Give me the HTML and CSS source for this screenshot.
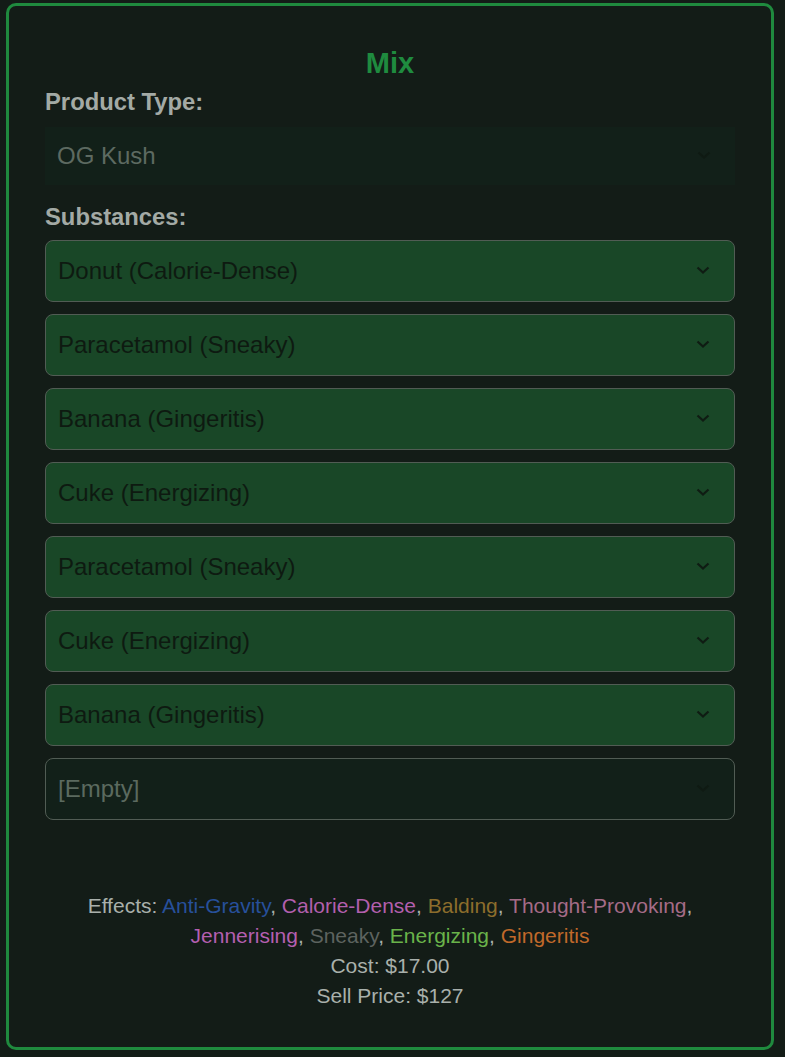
FILE: index.html
```html
<!DOCTYPE html>
<html lang="en">
<head>
<meta charset="utf-8"/>
<title>Mix</title>
<link rel="stylesheet" href="styles.css">
</head>
<body>
<div class="mix-card">
  <h2 class="mix-title">Mix</h2>
  <label class="field-label">Product Type:</label>
  <div class="picker picker-product">
    <span>OG Kush</span>
    <svg class="chevron" width="14" height="8" viewBox="0 0 14 8"><polyline points="1.5,1.5 7,6.5 12.5,1.5" fill="none" stroke="currentColor" stroke-width="2.2"/></svg>
  </div>
  <label class="field-label label-substances">Substances:</label>
  <div class="substance-list" id="substanceList"></div>
  <div class="mix-summary">
    <div>Effects: <span class="fx-antigravity">Anti-Gravity</span>, <span class="fx-calorie">Calorie-Dense</span>, <span class="fx-balding">Balding</span>, <span class="fx-thought">Thought-Provoking</span>, <span class="fx-jenner">Jennerising</span>, <span class="fx-sneaky">Sneaky</span>, <span class="fx-energizing">Energizing</span>, <span class="fx-ginger">Gingeritis</span></div>
    <div>Cost: $17.00</div>
    <div>Sell Price: $127</div>
  </div>
</div>
<script>
const substances = [
  'Donut (Calorie-Dense)',
  'Paracetamol (Sneaky)',
  'Banana (Gingeritis)',
  'Cuke (Energizing)',
  'Paracetamol (Sneaky)',
  'Cuke (Energizing)',
  'Banana (Gingeritis)',
  ''
];

const list = document.getElementById('substanceList');
substances.forEach(name => {
  const box = document.createElement('div');
  box.className = name ? 'picker picker-filled' : 'picker picker-empty';
  box.innerHTML = '<span>' + (name || '[Empty]') + '</span>' +
    '<svg class="chevron" width="14" height="8" viewBox="0 0 14 8"><polyline points="1.5,1.5 7,6.5 12.5,1.5" fill="none" stroke="currentColor" stroke-width="2.2"/></svg>';
  list.appendChild(box);
});
</script>
</body>
</html>
```

FILE: styles.css
```css
html, body {
  height: 100%;
}
body {
  margin: 0;
  background: #131c17;
  font-family: 'Liberation Sans', Arial, sans-serif;
  box-sizing: border-box;
  padding: 3px 11px 7px 6px;
}
.mix-card {
  box-sizing: border-box;
  height: 100%;
  border: 3px solid #1f8a3e;
  border-radius: 10px;
  background: #131c17;
  padding: 40px 36px 0 36px;
  display: flex;
  flex-direction: column;
}
.mix-title {
  margin: 0;
  text-align: center;
  color: #1f8b3f;
  font-size: 29px;
  line-height: 34px;
  font-weight: bold;
}
.field-label {
  display: block;
  margin-top: 8px;
  color: #a3aaa5;
  font-size: 23.8px;
  line-height: 27px;
  font-weight: bold;
}
.label-substances {
  margin-top: 18px;
}
.picker {
  box-sizing: border-box;
  display: flex;
  align-items: center;
  justify-content: space-between;
  font-size: 24px;
  padding: 0 24px 0 12px;
}
.picker .chevron {
  flex: none;
  margin-bottom: 3px;
}
.picker-product {
  margin-top: 12px;
  height: 58px;
  background: #122019;
  color: #5d6a61;
  padding-left: 12px;
}
.picker-product .chevron {
  color: #0f1a13;
}
.substance-list {
  margin-top: 10px;
  display: flex;
  flex-direction: column;
  gap: 12px;
}
.picker-filled,
.picker-empty {
  height: 62px;
  border: 1px solid #515c54;
  border-radius: 8px;
}
.picker-filled {
  background: #194727;
  color: #0e1a11;
}
.picker-filled .chevron {
  color: #0f1c13;
}
.picker-empty {
  background: #122019;
  color: #5b6a5f;
}
.picker-empty .chevron {
  color: #0f1a13;
}
.mix-summary {
  margin-top: 71px;
  text-align: center;
  color: #a9b0ab;
  font-size: 21px;
  line-height: 30px;
}
.fx-antigravity { color: #27509b; }
.fx-calorie { color: #b25fad; }
.fx-balding { color: #8c6d2c; }
.fx-thought { color: #a56b87; }
.fx-jenner { color: #b45fb0; }
.fx-sneaky { color: #5d635f; }
.fx-energizing { color: #6ab34a; }
.fx-ginger { color: #c0692a; }
```
